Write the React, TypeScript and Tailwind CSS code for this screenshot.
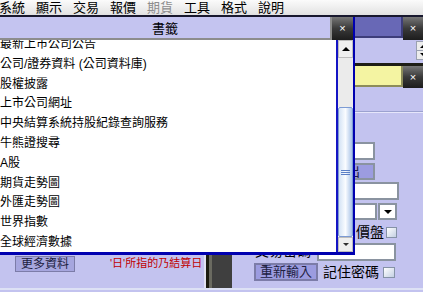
import React from "react";

const menus = ["系統", "顯示", "交易", "報價", "期貨", "工具", "格式", "說明"];

const bookmarks = [
  "最新上市公司公告",
  "公司/證券資料 (公司資料庫)",
  "股權披露",
  "上市公司網址",
  "中央結算系統持股紀錄查詢服務",
  "牛熊證搜尋",
  "A股",
  "期貨走勢圖",
  "外匯走勢圖",
  "世界指數",
  "全球經濟數據",
];

const CloseButton = ({ className }: { className: string }) => (
  <div
    className={`flex shrink-0 items-center justify-center bg-linear-to-b from-[#777777] via-[#3a3a3a] to-[#1d1d1d] text-[11px] leading-none text-white ${className}`}
  >
    ×
  </div>
);

const TriUp = () => (
  <div className="h-0 w-0 border-x-[4px] border-b-[4px] border-x-transparent border-b-black" />
);

const TriDown = ({ size = "sm" }: { size?: "sm" | "md" }) =>
  size === "sm" ? (
    <div className="h-0 w-0 border-x-[3.5px] border-t-[3px] border-x-transparent border-t-[#303030]" />
  ) : (
    <div className="h-0 w-0 border-x-[4px] border-t-[4px] border-x-transparent border-t-black" />
  );

const Check = ({ className = "" }: { className?: string }) => (
  <div
    className={`shrink-0 border border-[#8592a6] bg-linear-to-br from-white to-[#c4d0e2] ${className}`}
  />
);

const Scrollbar = () => (
  <div className="flex w-[17px] shrink-0 flex-col border-l-2 border-[#1414c4]">
    <div className="flex h-[18px] items-center justify-center border border-[#bdbdbd] bg-[#efefef]">
      <TriUp />
    </div>
    <div className="h-[49px] bg-[#ebebeb]" />
    <div className="flex h-[130px] flex-col items-center justify-center gap-[1px] rounded-[2px] border border-[#7c9bd4] bg-linear-to-r from-[#d4e3f5] via-[#fafcff] to-[#a9c3e7]">
      <div className="h-px w-[9px] bg-[#5b7fc6]" />
      <div className="h-px w-[9px] bg-[#5b7fc6]" />
      <div className="h-px w-[9px] bg-[#5b7fc6]" />
    </div>
    <div className="flex h-[15px] items-center justify-center border border-[#bdbdbd] bg-[#efefef]">
      <TriDown />
    </div>
  </div>
);

export default function App() {
  return (
    <div className="relative h-[292px] w-[423px] overflow-hidden bg-[#c3c3ef] font-['Liberation_Sans','Noto_Sans_CJK_TC',sans-serif] text-black">
      {/* menu bar */}
      <div className="h-[15px] bg-linear-to-b from-[#fbfbfb] to-[#e2e2e2]">
        <div className="-ml-px flex gap-[11px] text-[13px] leading-[15px]">
          {menus.map((m) => (
            <span key={m} className={m === "期貨" ? "text-[#8e8e8e]" : ""}>
              {m}
            </span>
          ))}
        </div>
      </div>
      <div className="h-[2px] bg-[#18182e]" />

      {/* window behind, top right */}
      <div className="absolute left-[230px] top-[17px] flex h-[46px] w-[193px] flex-col">
        <div className="flex h-[23px]">
          <div className="h-[21px] flex-1 border-r-2 border-b-2 border-[#3d3d7a] bg-[#6868b6]" />
          <CloseButton className="h-[23px] w-[20px]" />
        </div>
        <div className="flex flex-1 justify-end pt-px">
          <div className="-mr-[8px] flex h-[19px] w-[15px] flex-col border border-[#9aa0b0] bg-[#ececec]">
            <div className="flex flex-1 items-center justify-center border-b border-[#9aa0b0]">
              <TriUp />
            </div>
            <div className="flex flex-1 items-center justify-center">
              <TriDown size="md" />
            </div>
          </div>
        </div>
      </div>

      {/* login window */}
      <div className="absolute left-[232px] top-[63px] flex h-[227px] w-[191px] flex-col border-b-2 border-[#dde1f5]">
        <div className="h-[3px] bg-[#1e1e16]" />
        <div className="flex h-[22px]">
          <div className="h-[21px] flex-1 border-r-2 border-b-2 border-[#8c8c5a] bg-[#f4f4a2]" />
          <CloseButton className="h-[22px] w-[20px]" />
        </div>
        <div className="mt-[23px] h-[2px] border-t border-[#9ca2d0] bg-[#e6e6fb]" />

        <div className="mt-[29px] flex h-[18px] justify-end pr-[48px]">
          <div className="w-[75px] border-2 border-[#8a93a0] bg-white" />
        </div>
        <div className="mt-[3px] flex h-[17px] justify-end pr-[48px]">
          <div className="w-[75px] border-2 border-[#8a93a0] bg-[#9c9ce0] pr-[13px] text-right text-[13px] leading-[13px] text-[#202040]">
            登出
          </div>
        </div>
        <div className="mt-[2px] flex h-[18px] justify-end pr-[24px]">
          <div className="w-[100px] border-2 border-[#8a93a0] bg-white" />
        </div>
        <div className="mt-[3px] flex h-[17px] justify-end gap-px pr-[26px]">
          <div className="w-[60px] border-2 border-[#8a93a0] bg-white" />
          <div className="flex w-[19px] items-center justify-center border-2 border-[#8a93a0] bg-white">
            <TriDown size="md" />
          </div>
        </div>
        <div className="mt-[6px] flex h-[13px] items-center justify-end gap-[2px] pr-[26px]">
          <span className="text-[14px] leading-[13px]">價盤</span>
          <Check className="h-[11px] w-[11px]" />
        </div>
        <div className="mt-[4px] flex h-[18px] items-center justify-end gap-[6px] pr-[27px]">
          <span className="-mt-[3px] text-[14px] leading-[18px]">交易密碼</span>
          <div className="h-[18px] w-[79px] border-2 border-[#8a93a0] bg-white" />
        </div>
        <div className="mt-[2px] flex h-[18px] items-center justify-end pr-[28px]">
          <div className="h-[18px] w-[64px] border-2 border-[#7c7ca8] bg-[#9c9ce0] text-center text-[13px] leading-[14px] text-[#202040]">
            重新輸入
          </div>
          <span className="ml-[5px] text-[14px] leading-[18px]">記住密碼</span>
          <Check className="ml-[4px] h-[11px] w-[12px]" />
        </div>
      </div>

      {/* bottom left window */}
      <div className="absolute left-0 top-[255px] flex h-[35px] w-[232px] border-b-2 border-[#dde1f5]">
        <div className="flex w-[204px] items-start">
          <div className="ml-[15px] mt-px h-[16px] w-[60px] border border-[#7c7ca8] bg-[#a6a6de] text-center text-[12px] leading-[14px] text-[#202040]">
            更多資料
          </div>
          <div className="ml-[35px] mt-[3px] whitespace-nowrap text-[11px] leading-[11px] text-[#c00000]">
            '日'所指的乃結算日
          </div>
        </div>
        <div className="w-[2px] bg-[#e2e2f2]" />
        <div className="w-[3px] bg-[#1c1c10]" />
        <div className="w-[3px] bg-[#6a6a60]" />
        <div className="flex-1 bg-[#3f3f3f]" />
      </div>

      {/* 書籤 popup */}
      <div className="absolute left-0 top-[17px] flex h-[238px] w-[355px] flex-col border-r-2 border-b-[3px] border-[#0000b0] bg-white">
        <div className="flex h-[23px] shrink-0 bg-[#c3c3ef]">
          <div className="flex h-[23px] flex-1 items-center justify-center border-r-2 border-b-2 border-[#8c8c8c] bg-[#c4c4f0] pt-[2px] text-[13px]">
            書籤
          </div>
          <CloseButton className="h-[23px] w-[21px]" />
        </div>
        <div className="flex min-h-0 flex-1">
          <div className="w-[336px] overflow-hidden">
            <div className="-mt-[5px]">
              {bookmarks.map((b) => (
                <div
                  key={b}
                  className="h-[19.8px] whitespace-nowrap text-[12px] leading-[19.8px]"
                >
                  {b}
                </div>
              ))}
            </div>
          </div>
          <Scrollbar />
        </div>
      </div>
    </div>
  );
}
